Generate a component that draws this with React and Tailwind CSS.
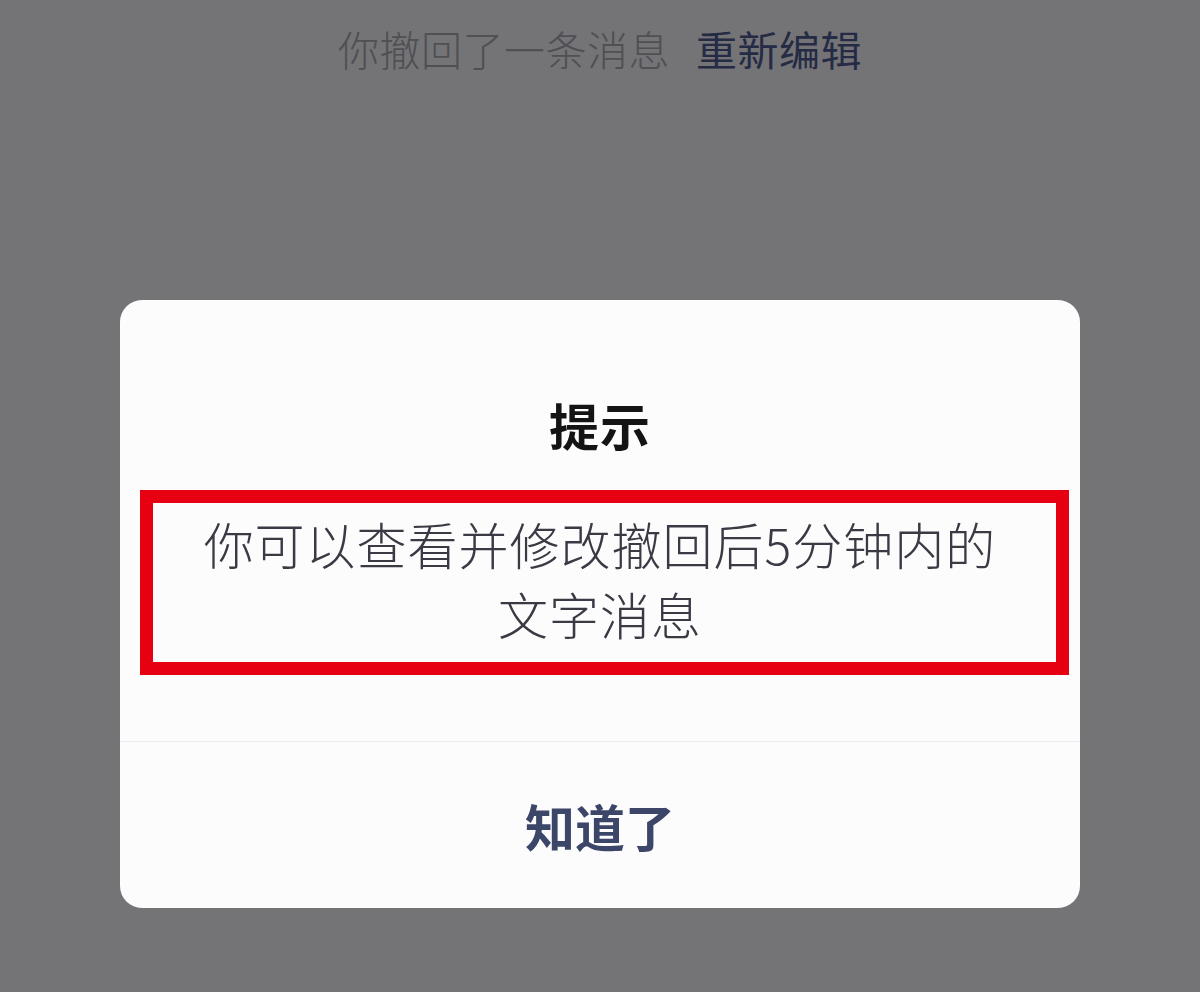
import React from "react";

const cjk = { fontFamily: '"Noto Sans CJK SC", "Noto Sans", sans-serif' };

export default function App() {
  return (
    <div
      className="min-h-screen w-full bg-[#747477] flex flex-col items-center"
      style={cjk}
    >
      {/* recalled message notice */}
      <div className="pt-[24px] flex items-center text-[41px] leading-[48px] tracking-[0.5px]">
        <span className="text-[#4f4f54] font-light">你撤回了一条消息</span>
        <span className="ml-[26px] text-[#262b45]">重新编辑</span>
      </div>

      {/* dialog */}
      <div className="mt-[228px] w-[960px] rounded-[22px] bg-[#fcfcfd] flex flex-col">
        <div className="pt-[94px] text-center text-[50px] leading-[60px] font-bold tracking-[1px] text-[#141414]">
          提示
        </div>
        <div className="mt-[36px] ml-[20px] mr-[11px] border-[13px] border-[#e60012] pt-[5px] pb-[14px] pr-[9px]">
          <div className="text-center text-[50px] leading-[70px] font-light tracking-[1px] text-[#3a3944]">
            你可以查看并修改撤回后5分钟内的
            <br />
            文字消息
          </div>
        </div>
        <div className="mt-[66px] border-t border-[#eceef2] h-[167px] flex items-center justify-center">
          <span className="text-[50px] leading-[60px] font-bold text-[#3c4669]">
            知道了
          </span>
        </div>
      </div>
    </div>
  );
}
